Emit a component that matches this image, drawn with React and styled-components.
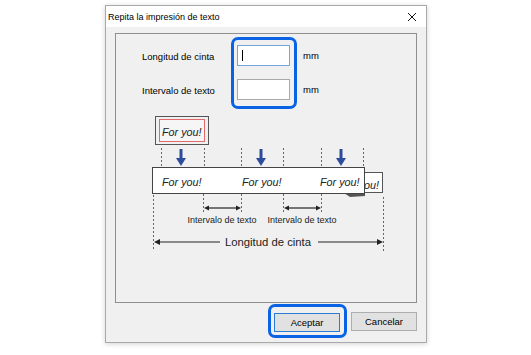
import React from "react";
import styled, { createGlobalStyle } from "styled-components";

const Global = createGlobalStyle`
  html, body { margin: 0; padding: 0; background: #ffffff; }
  body { font-family: "Liberation Sans", Arial, sans-serif; }
`;

const Page = styled.div`
  width: 531px;
  height: 355px;
  display: flex;
  align-items: flex-start;
  padding: 5px 0 0 105px;
  box-sizing: border-box;
`;

const Dialog = styled.div`
  width: 322px;
  height: 338px;
  box-sizing: border-box;
  border: 1px solid #a9a9a9;
  box-shadow: 0 1px 5px rgba(0, 0, 0, 0.18);
  background: #f0f0f0;
  display: flex;
  flex-direction: column;
`;

const TitleBar = styled.div`
  height: 21px;
  flex: none;
  background: #ffffff;
  display: flex;
  align-items: center;
  justify-content: space-between;
  padding: 0 9px 0 2px;
  font-size: 9px;
  color: #000;
`;

const Body = styled.div`
  flex: 1;
  display: flex;
  flex-direction: column;
  padding: 6px 9px 4px 9px;
`;

const Group = styled.div`
  flex: 1;
  border: 1px solid #8f8f8f;
  display: flex;
  flex-direction: column;
`;

const FormRow = styled.div`
  display: flex;
  align-items: flex-start;
  padding: 3px 0 0 26px;
  font-size: 9.5px;
  color: #000;
`;

const Labels = styled.div`
  width: 89px;
  display: flex;
  flex-direction: column;
  padding-top: 12px;
  gap: 19px;
`;

const Label = styled.div`
  height: 15px;
  line-height: 15px;
  white-space: nowrap;
`;

const Highlight = styled.div`
  width: 66px;
  height: 72px;
  box-sizing: border-box;
  border: 3px solid #0a62e4;
  border-radius: 7px;
  padding: 5px 0 0 3px;
  display: flex;
  flex-direction: column;
  gap: 13px;
`;

const Field = styled.div`
  width: 53px;
  height: 21px;
  box-sizing: border-box;
  background: #ffffff;
  border: 1px solid ${(p) => (p.$focused ? "#6fa6dc" : "#a9a9a9")};
  display: flex;
  align-items: center;
  padding-left: 4px;
`;

const Caret = styled.span`
  width: 1px;
  height: 11px;
  background: #000;
`;

const Units = styled.div`
  display: flex;
  flex-direction: column;
  padding: 11px 0 0 6px;
  gap: 19px;
`;

const Diagram = styled.svg`
  display: block;
  flex: none;
`;

const Buttons = styled.div`
  display: flex;
  justify-content: flex-end;
  align-items: center;
  gap: 4px;
  height: 34px;
  margin-top: 1px;
`;

const FocusRing = styled.div`
  box-sizing: border-box;
  height: 34px;
  border: 3px solid #0a62e4;
  border-radius: 7px;
  padding: 5px 4px 0 3px;
`;

const Button = styled.button`
  width: 66px;
  height: 19px;
  box-sizing: border-box;
  margin: 0;
  padding: 0;
  background: #e1e1e1;
  border: 1px solid ${(p) => (p.$default ? "#2a7bd2" : "#adadad")};
  font-family: "Liberation Sans", Arial, sans-serif;
  font-size: 9.5px;
  color: #000;
`;

const CloseIcon = () => (
  <svg width="10" height="10" viewBox="0 0 10 10">
    <path d="M1 1 L9 9 M9 1 L1 9" stroke="#111" strokeWidth="1" fill="none" />
  </svg>
);

const DownArrow = ({ x }) => (
  <g fill="#2d4c9c">
    <rect x={x - 1.5} y={149} width={3} height={10} />
    <polygon points={`${x - 5},158 ${x + 5},158 ${x},166`} />
  </g>
);

const HArrow = ({ x1, x2, y }) => (
  <g>
    <line x1={x1 + 3} y1={y} x2={x2 - 3} y2={y} stroke="#222" strokeWidth="1.2" />
    <polygon points={`${x1},${y} ${x1 + 5},${y - 2.5} ${x1 + 5},${y + 2.5}`} fill="#222" />
    <polygon points={`${x2},${y} ${x2 - 5},${y - 2.5} ${x2 - 5},${y + 2.5}`} fill="#222" />
  </g>
);

const Dash = ({ x, y1, y2 }) => (
  <line x1={x + 0.5} y1={y1} x2={x + 0.5} y2={y2} stroke="#666" strokeWidth="1" strokeDasharray="2 2" />
);

const textStyle = { fontFamily: "'Liberation Sans', Arial, sans-serif" };

const TapeDiagram = () => (
  <Diagram width="300" height="145" viewBox="116 109 300 145">
    <defs>
      <clipPath id="backPaper">
        <rect x="365" y="170" width="20" height="25" />
      </clipPath>
    </defs>
    <rect x="155.5" y="116.5" width="53" height="28" fill="#f0f0f0" stroke="#555" />
    <rect x="159.5" y="119.5" width="45" height="22" fill="#f6f6f6" stroke="#e36a6a" />
    <text x="162" y="136" fontSize="10.8" fontStyle="italic" fill="#222" style={textStyle}>For you!</text>

    {[161, 204, 241, 283, 321, 363].map((x) => (
      <Dash key={"t" + x} x={x} y1={148} y2={167} />
    ))}
    {[181, 261, 341].map((x) => (
      <DownArrow key={x} x={x} />
    ))}

    <polygon points="344,193 365,191 365,196 350,197" fill="#555" />
    <rect x="345.5" y="172.5" width="37" height="20" fill="#ffffff" stroke="#555" />
    <g clipPath="url(#backPaper)">
      <text x="364" y="189" fontSize="10.8" fontStyle="italic" fill="#222" style={textStyle}>ou!</text>
    </g>

    <rect x="152.5" y="167.5" width="212" height="26" fill="#ffffff" stroke="#444" />
    {[162, 242, 320].map((x) => (
      <text key={x} x={x} y="186" fontSize="10.8" fontStyle="italic" fill="#222" style={textStyle}>For you!</text>
    ))}

    <Dash x={153} y1={195} y2={251} />
    <Dash x={383} y1={197} y2={251} />
    {[203, 241, 283, 321].map((x) => (
      <Dash key={"b" + x} x={x} y1={194} y2={212} />
    ))}

    <HArrow x1={204} x2={241} y={208} />
    <HArrow x1={284} x2={321} y={208} />
    <text x="222" y="222.5" fontSize="9" fill="#222" textAnchor="middle" style={textStyle}>Intervalo de texto</text>
    <text x="302" y="222.5" fontSize="9" fill="#222" textAnchor="middle" style={textStyle}>Intervalo de texto</text>

    <line x1="157" y1="242" x2="220" y2="242" stroke="#222" strokeWidth="1.2" />
    <line x1="318" y1="242" x2="379" y2="242" stroke="#222" strokeWidth="1.2" />
    <polygon points="154,242 160,239 160,245" fill="#222" />
    <polygon points="383,242 377,239 377,245" fill="#222" />
    <text x="268" y="246" fontSize="11.3" fill="#222" textAnchor="middle" style={textStyle}>Longitud de cinta</text>
  </Diagram>
);

export default function App() {
  return (
    <>
      <Global />
      <Page>
        <Dialog>
          <TitleBar>
            <span>Repita la impresión de texto</span>
            <CloseIcon />
          </TitleBar>
          <Body>
            <Group>
              <FormRow>
                <Labels>
                  <Label>Longitud de cinta</Label>
                  <Label>Intervalo de texto</Label>
                </Labels>
                <Highlight>
                  <Field $focused>
                    <Caret />
                  </Field>
                  <Field />
                </Highlight>
                <Units>
                  <Label>mm</Label>
                  <Label>mm</Label>
                </Units>
              </FormRow>
              <TapeDiagram />
            </Group>
            <Buttons>
              <FocusRing>
                <Button $default>Aceptar</Button>
              </FocusRing>
              <Button>Cancelar</Button>
            </Buttons>
          </Body>
        </Dialog>
      </Page>
    </>
  );
}
